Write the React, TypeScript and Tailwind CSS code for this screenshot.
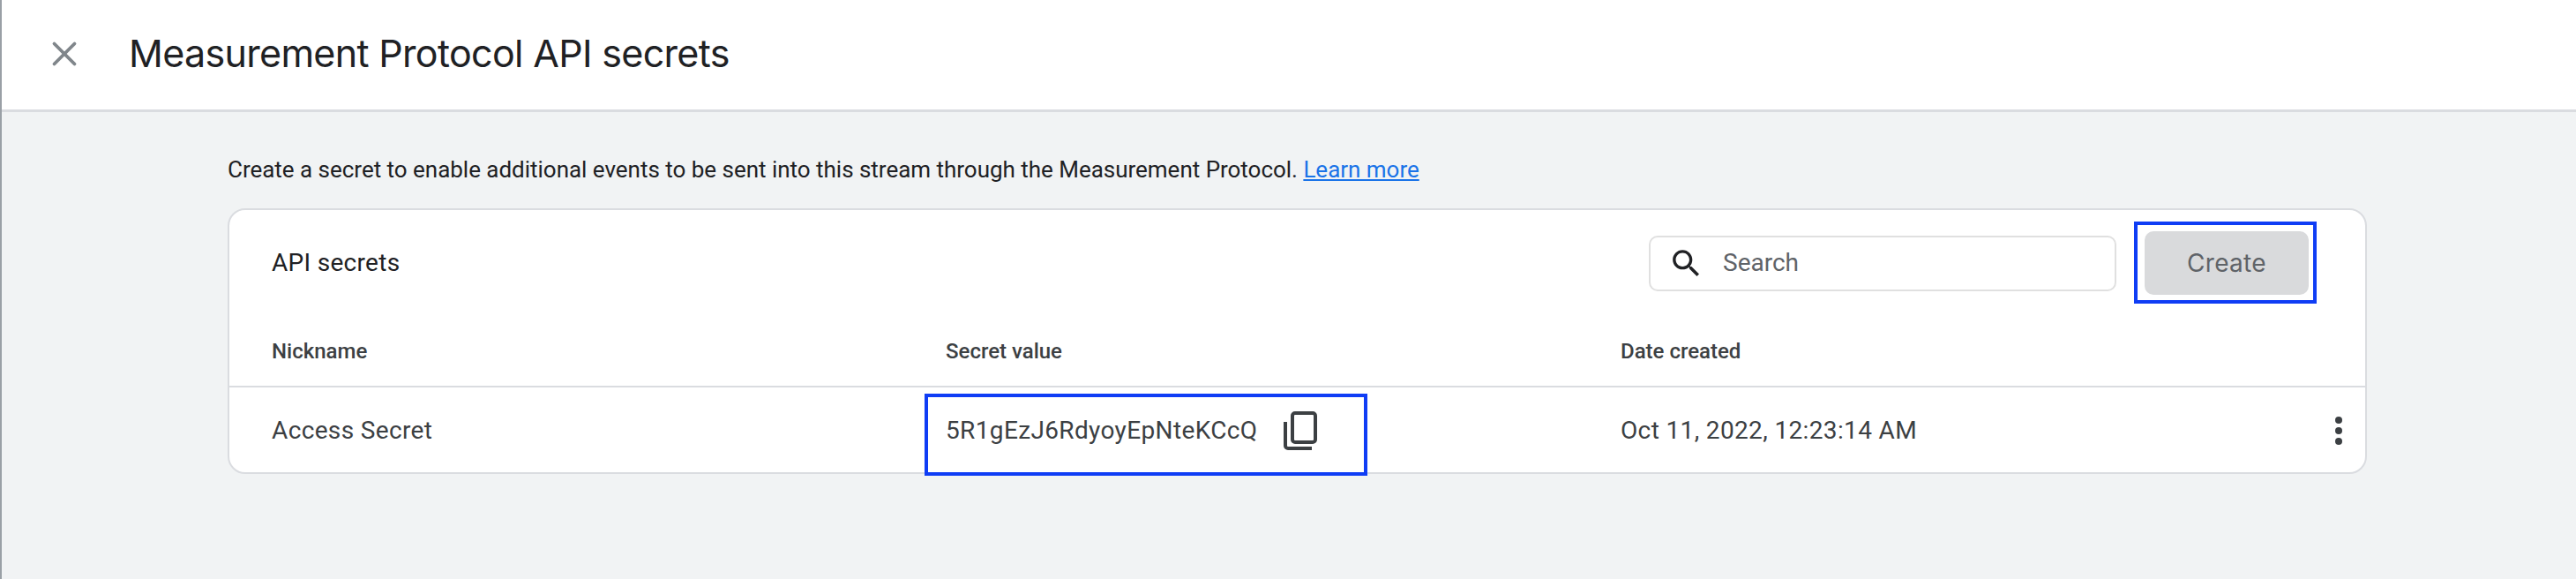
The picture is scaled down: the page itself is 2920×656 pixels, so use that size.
import { X } from "lucide-react";

const App = () => {
  return (
    <div className="w-[2920px] h-[656px] overflow-hidden flex flex-col bg-[#f1f3f4] border-l-2 border-[#9aa0a6] font-['Roboto',sans-serif]">
      <header className="h-[127px] shrink-0 bg-white border-b-[3px] border-[#dadce0] flex items-center pl-[48px] pb-[3px]">
        <X className="w-[46px] h-[46px] text-[#80868b]" strokeWidth={2} />
        <h1 className="ml-[50px] text-[43px] leading-none text-[#202124] font-['Inter',sans-serif] tracking-[-0.68px]">
          Measurement Protocol API secrets
        </h1>
      </header>

      <main className="pl-[256px] pt-[47px] w-[2681px]">
        <p className="h-[62px] text-[26px] leading-[36px] text-[#202124] tracking-[-0.02px]">
          Create a secret to enable additional events to be sent into this stream through the Measurement Protocol.{" "}
          <a className="text-[#1a73e8] underline">Learn more</a>
        </p>

        <section className="h-[301px] bg-white border-2 border-[#dadce0] rounded-[20px] flex flex-col">
          <div className="h-[120px] flex items-center pl-[48px] pr-[64px]">
            <h2 className="text-[28px] text-[#202124] tracking-[0.3px]">API secrets</h2>
            <div className="ml-auto w-[530px] h-[63px] border-2 border-[#e0e0e0] rounded-[10px] flex items-center pl-[20px]">
              <svg className="w-[41px] h-[41px] text-[#202124]" viewBox="0 0 24 24" fill="currentColor">
                <path d="M15.5 14h-.79l-.28-.27C15.41 12.59 16 11.11 16 9.5 16 5.91 13.09 3 9.500 3S3 5.91 3 9.500 5.91 16 9.500 16c1.610 0 3.090-.59 4.230-1.570l.27.28v.79l5 4.990L20.490 19l-4.990-5zm-6 0C7.010 14 5 11.990 5 9.500S7.010 5 9.500 5 14 7.010 14 9.500 11.990 14 9.500 14z" />
              </svg>
              <span className="ml-[21px] text-[28px] text-[#5f6368]">Search</span>
            </div>
            <div className="relative ml-[32px] w-[186px] h-[72px] bg-[#d9dadc] rounded-[10px] flex items-center justify-center font-['Inter',sans-serif] text-[28px] tracking-[0.3px] text-[#5f6368]">
              Create
              <div className="absolute -left-[12px] -right-[9px] -top-[11px] -bottom-[10px] border-4 border-[#0f3df5]" />
            </div>
          </div>

          <div className="h-[81px] grid grid-cols-[764px_765px_1fr] pl-[48px] border-b-2 border-[#dadce0] items-center text-[24px] font-medium text-[#3c4043]">
            <div>Nickname</div>
            <div>Secret value</div>
            <div>Date created</div>
          </div>

          <div className="flex-1 grid grid-cols-[764px_765px_1fr] pl-[48px] pt-[2px] items-center text-[28px] text-[#3c4043] tracking-[0.36px]">
            <div>Access Secret</div>
            <div className="relative flex items-center h-full">
              <span>5R1gEzJ6RdyoyEpNteKCcQ</span>
              <svg className="ml-[30px] w-[38px] h-[44px] text-[#3c4043]" viewBox="0 0 38 44" fill="none" stroke="currentColor" strokeWidth={4}>
                <rect x="10" y="2" width="26" height="33" rx="3" />
                <path d="M2 12V39a3 3 0 0 0 3 3H32" />
              </svg>
              <div className="absolute left-[-24px] w-[502px] top-[5px] bottom-[-4px] border-4 border-[#0f3df5]" />
            </div>
            <div className="flex items-center pr-[26px]">
              <span>Oct 11, 2022, 12:23:14 AM</span>
              <div className="ml-auto flex flex-col gap-[4px]">
                <span className="w-[8px] h-[8px] rounded-full bg-[#3c4043]" />
                <span className="w-[8px] h-[8px] rounded-full bg-[#3c4043]" />
                <span className="w-[8px] h-[8px] rounded-full bg-[#3c4043]" />
              </div>
            </div>
          </div>
        </section>
      </main>
    </div>
  );
};

export default App;
